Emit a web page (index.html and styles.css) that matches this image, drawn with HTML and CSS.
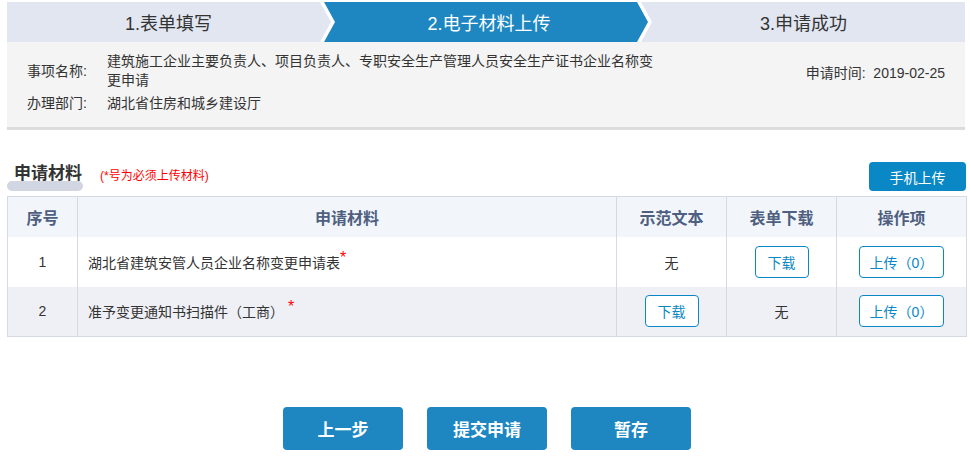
FILE: index.html
```html
<!DOCTYPE html>
<html lang="zh-CN">
<head>
  <meta charset="UTF-8" />
  <title>电子材料上传</title>
  <meta name="viewport" content="width=device-width, initial-scale=1.0" />
  <link rel="stylesheet" href="styles.css">
</head>
<body>
  <div class="page">

    <!-- Steps -->
    <div class="steps">
      <div class="step step-first">1.表单填写</div>
      <div class="step step-active">
        <div class="step-active-inner">2.电子材料上传</div>
      </div>
      <div class="step step-last">3.申请成功</div>
    </div>

    <!-- Item info -->
    <div class="info-panel">
      <div class="info-rows">
        <div class="info-row">
          <span class="info-label">事项名称:</span>
          <span class="info-value">建筑施工企业主要负责人、项目负责人、专职安全生产管理人员安全生产证书企业名称变更申请</span>
        </div>
        <div class="info-row">
          <span class="info-label">办理部门:</span>
          <span class="info-value">湖北省住房和城乡建设厅</span>
        </div>
      </div>
      <div class="info-time">申请时间:&nbsp;&nbsp;2019-02-25</div>
    </div>

    <!-- Materials -->
    <div class="section-head">
      <div class="section-left">
        <span class="section-title">申请材料</span>
        <span class="section-note">(*号为必须上传材料)</span>
      </div>
      <button class="mobile-button">手机上传</button>
    </div>

    <table class="material-table">
      <colgroup>
        <col style="width: 70px">
        <col style="width: 539px">
        <col style="width: 110px">
        <col style="width: 110px">
        <col style="width: 130px">
      </colgroup>
      <thead>
        <tr>
          <th>序号</th>
          <th>申请材料</th>
          <th>示范文本</th>
          <th>表单下载</th>
          <th>操作项</th>
        </tr>
      </thead>
      <tbody>
        <tr>
          <td>1</td>
          <td class="name-cell">湖北省建筑安管人员企业名称变更申请表<span class="required">*</span></td>
          <td>无</td>
          <td><button class="line-button">下载</button></td>
          <td><button class="line-button upload-button">上传（0）</button></td>
        </tr>
        <tr class="row-alt">
          <td>2</td>
          <td class="name-cell">准予变更通知书扫描件（工商） <span class="required">*</span></td>
          <td><button class="line-button">下载</button></td>
          <td>无</td>
          <td><button class="line-button upload-button">上传（0）</button></td>
        </tr>
      </tbody>
    </table>

    <!-- Actions -->
    <div class="actions">
      <button class="action-button">上一步</button>
      <button class="action-button">提交申请</button>
      <button class="action-button">暂存</button>
    </div>

  </div>
</body>
</html>
```

FILE: styles.css
```css
:root {
  --blue: #1e87c2;
  --btn-blue: #0a87c5;
  --step-bg: #e1e6f1;
  --line: #d5d9e3;
  --text: #333;
}

* {
  box-sizing: border-box;
}

body {
  margin: 0;
  font-family: "Liberation Sans", "Noto Sans CJK SC", sans-serif;
  color: var(--text);
  background-color: white;
}

.page {
  margin: 2px 5px 0 7px;
}

/* Steps */
.steps {
  display: flex;
  height: 40px;
  background-color: var(--step-bg);
  font-size: 18px;
}

.step {
  display: flex;
  align-items: center;
  justify-content: center;
}

.step-first {
  width: 313px;
  padding-left: 10px;
}

.step-last {
  width: 313px;
  padding-right: 10px;
}

.step-active {
  width: 332px;
  background-color: white;
  clip-path: polygon(0 0, 321px 0, 100% 50%, 321px 100%, 0 100%, 11px 50%);
}

.step-active-inner {
  width: 100%;
  height: 100%;
  display: flex;
  align-items: center;
  justify-content: center;
  background-color: var(--blue);
  color: white;
  padding-left: 6px;
  clip-path: polygon(4px 0, 317px 0, 328px 50%, 317px 100%, 4px 100%, 15px 50%);
}

/* Info panel */
.info-panel {
  display: flex;
  justify-content: space-between;
  align-items: flex-start;
  background-color: #f4f4f4;
  border-bottom: 3px solid #dcdcdc;
  padding: 10px 20px 14px 20px;
  font-size: 14px;
  line-height: 19px;
}

.info-rows {
  display: flex;
  flex-direction: column;
  gap: 4px;
}

.info-row {
  display: flex;
  align-items: center;
}

.info-label {
  width: 80px;
  flex-shrink: 0;
}

.info-value {
  width: 552px;
}

.info-time {
  margin-top: 12px;
}

/* Section head */
.section-head {
  display: flex;
  justify-content: space-between;
  align-items: flex-end;
  margin-top: 32px;
}

.section-left {
  display: flex;
  align-items: center;
  padding-bottom: 6px;
}

.section-title {
  position: relative;
  z-index: 0;
  width: 76px;
  padding-left: 7px;
  font-size: 17px;
  font-weight: bold;
  line-height: 22px;
}

.section-title::after {
  content: "";
  position: absolute;
  z-index: -1;
  left: 0;
  right: 0;
  bottom: -6px;
  height: 10px;
  border-radius: 5px;
  background-color: #d2d6e3;
}

.section-note {
  margin-left: 17px;
  color: #ff0000;
  font-size: 12px;
}

.mobile-button {
  width: 97px;
  height: 29px;
  margin-right: -1px;
  background-color: var(--btn-blue);
  color: white;
  border: none;
  border-radius: 4px;
  font-family: inherit;
  font-size: 14px;
  cursor: pointer;
}

/* Table */
.material-table {
  width: 959px;
  margin-top: 5px;
  border-collapse: collapse;
  table-layout: fixed;
  border: 1px solid var(--line);
  font-size: 14px;
}

.material-table th,
.material-table td {
  border-left: 1px solid var(--line);
  border-right: 1px solid var(--line);
  text-align: center;
  padding: 0;
}

.material-table th {
  height: 40px;
  background-color: #f2f6fb;
  color: #4f5f7f;
  font-size: 16px;
}

.material-table td {
  height: 50px;
}

.row-alt td {
  background-color: #eff0f5;
}

.material-table .name-cell {
  text-align: left;
  padding-left: 10px;
}

.required {
  color: #ff0000;
  font-size: 16px;
  position: relative;
  top: -5px;
}

.line-button {
  width: 54px;
  height: 32px;
  background-color: white;
  color: var(--btn-blue);
  border: 1px solid var(--btn-blue);
  border-radius: 4px;
  font-family: inherit;
  font-size: 14px;
  cursor: pointer;
}

.upload-button {
  width: 85px;
}

/* Actions */
.actions {
  display: flex;
  justify-content: center;
  gap: 24px;
  margin-top: 70px;
  padding-left: 2px;
}

.action-button {
  width: 120px;
  height: 43px;
  background-color: var(--blue);
  color: white;
  border: none;
  border-radius: 4px;
  font-family: inherit;
  font-size: 17px;
  font-weight: bold;
  cursor: pointer;
}
```
